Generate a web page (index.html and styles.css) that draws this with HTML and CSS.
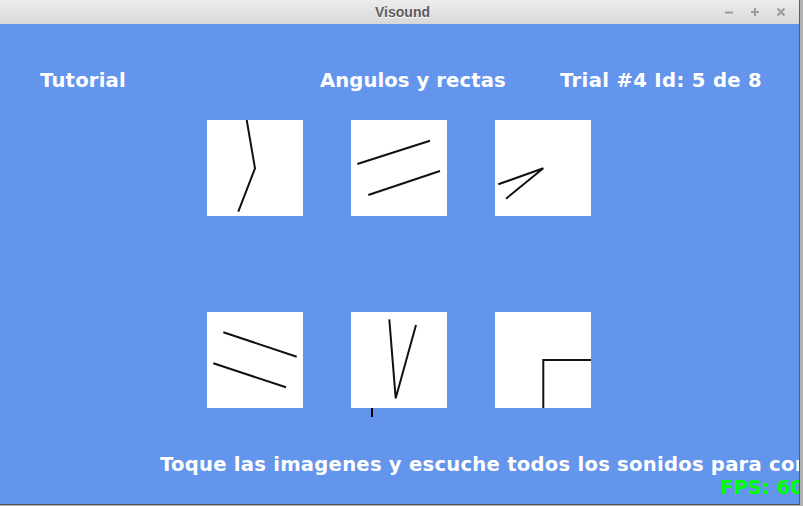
FILE: index.html
```html
<!DOCTYPE html>
<html lang="es">
<head>
<meta charset="utf-8">
<title>Visound</title>
<link rel="stylesheet" href="styles.css">
</head>
<body>
<div class="window">
  <div class="titlebar">
    <span class="title">Visound</span>
    <div class="controls">
      <svg class="ctl" width="10" height="10" viewBox="0 0 10 10"><path d="M1 5.5H9" stroke="#9c9c9c" stroke-width="2"/></svg>
      <svg class="ctl" width="10" height="10" viewBox="0 0 10 10"><path d="M1 5H9M5 1V9" stroke="#9c9c9c" stroke-width="2"/></svg>
      <svg class="ctl" width="10" height="10" viewBox="0 0 10 10"><path d="M1.5 1.5L8.5 8.5M8.5 1.5L1.5 8.5" stroke="#9c9c9c" stroke-width="2"/></svg>
    </div>
  </div>
  <div class="content">
    <div class="header">
      <span class="h-left">Tutorial</span>
      <span class="h-mid">Angulos y rectas</span>
      <span class="h-right">Trial #4 Id: 5 de 8</span>
    </div>
    <div class="grid">
      <div class="card">
        <svg viewBox="0 0 96 96" width="96" height="96"><polyline points="39.7,0 48,48.3 31.3,91.7" /></svg>
      </div>
      <div class="card">
        <svg viewBox="0 0 96 96" width="96" height="96"><line x1="6.3" y1="44" x2="79" y2="20.7"/><line x1="17.3" y1="75" x2="89" y2="51"/></svg>
      </div>
      <div class="card">
        <svg viewBox="0 0 96 96" width="96" height="96"><polyline points="3.3,64.3 48.3,48.3 11,78.7" /></svg>
      </div>
      <div class="card">
        <svg viewBox="0 0 96 96" width="96" height="96"><line x1="16.3" y1="20.3" x2="89.7" y2="44.7"/><line x1="6.3" y1="51.3" x2="79" y2="75.3"/></svg>
      </div>
      <div class="card">
        <svg viewBox="0 0 96 96" width="96" height="96"><polyline points="38.3,7.3 44.7,86.3 65,13" /></svg>
        <span class="caret"></span>
      </div>
      <div class="card">
        <svg viewBox="0 0 96 96" width="96" height="96"><polyline points="48.3,96 48.3,48 96,48" /></svg>
      </div>
    </div>
    <div class="footer">Toque las imagenes y escuche todos los sonidos para continuar</div>
    <div class="fps">FPS: 60</div>
  </div>
</div>
</body>
</html>
```

FILE: styles.css
```css
html, body {
  margin: 0;
  padding: 0;
}
body {
  width: 803px;
  height: 506px;
  overflow: hidden;
  background: #b2b2b2;
}
.window {
  width: 799px;
  border-right: 1px solid #5e5e5e;
  border-bottom: 1px solid #505050;
  display: flex;
  flex-direction: column;
}
.titlebar {
  height: 24px;
  background: linear-gradient(#ececec, #d8d8d8);
  position: relative;
  display: flex;
  align-items: center;
  justify-content: center;
}
.title {
  font-family: "Liberation Sans", Arial, sans-serif;
  font-weight: bold;
  font-size: 14px;
  color: #5c5c5c;
  text-shadow: 0 1px 0 #ffffff;
  padding-left: 6px;
}
.controls {
  position: absolute;
  right: 13px;
  top: 7px;
  display: flex;
  gap: 16px;
}
.ctl {
  display: block;
}
.content {
  height: 480px;
  background: #6495ed;
  position: relative;
  overflow: hidden;
  padding-top: 45px;
  box-sizing: border-box;
  font-family: "DejaVu Sans", Verdana, sans-serif;
  font-weight: bold;
  font-size: 19.6px;
  line-height: 24px;
  color: #ffffff;
}
.header {
  display: flex;
  padding-left: 40px;
  white-space: nowrap;
}
.h-left { width: 280px; letter-spacing: 0.2px; }
.h-mid { width: 240px; letter-spacing: 0.1px; }
.h-right { letter-spacing: 0.35px; }
.grid {
  margin-top: 27px;
  margin-left: 207px;
  display: grid;
  grid-template-columns: repeat(3, 96px);
  grid-auto-rows: 96px;
  column-gap: 48px;
  row-gap: 96px;
}
.card {
  background: #ffffff;
  position: relative;
}
.card svg {
  display: block;
}
.card svg line, .card svg polyline {
  fill: none;
  stroke: #111111;
  stroke-width: 2;
  stroke-linejoin: miter;
}
.caret {
  position: absolute;
  left: 20px;
  top: 96px;
  width: 2px;
  height: 9px;
  background: #000000;
}
.footer {
  margin-top: 45px;
  padding-left: 160px;
  white-space: nowrap;
  letter-spacing: 0.25px;
}
.fps {
  position: absolute;
  left: 720px;
  top: 452px;
  color: #00ff00;
  white-space: nowrap;
}
```
